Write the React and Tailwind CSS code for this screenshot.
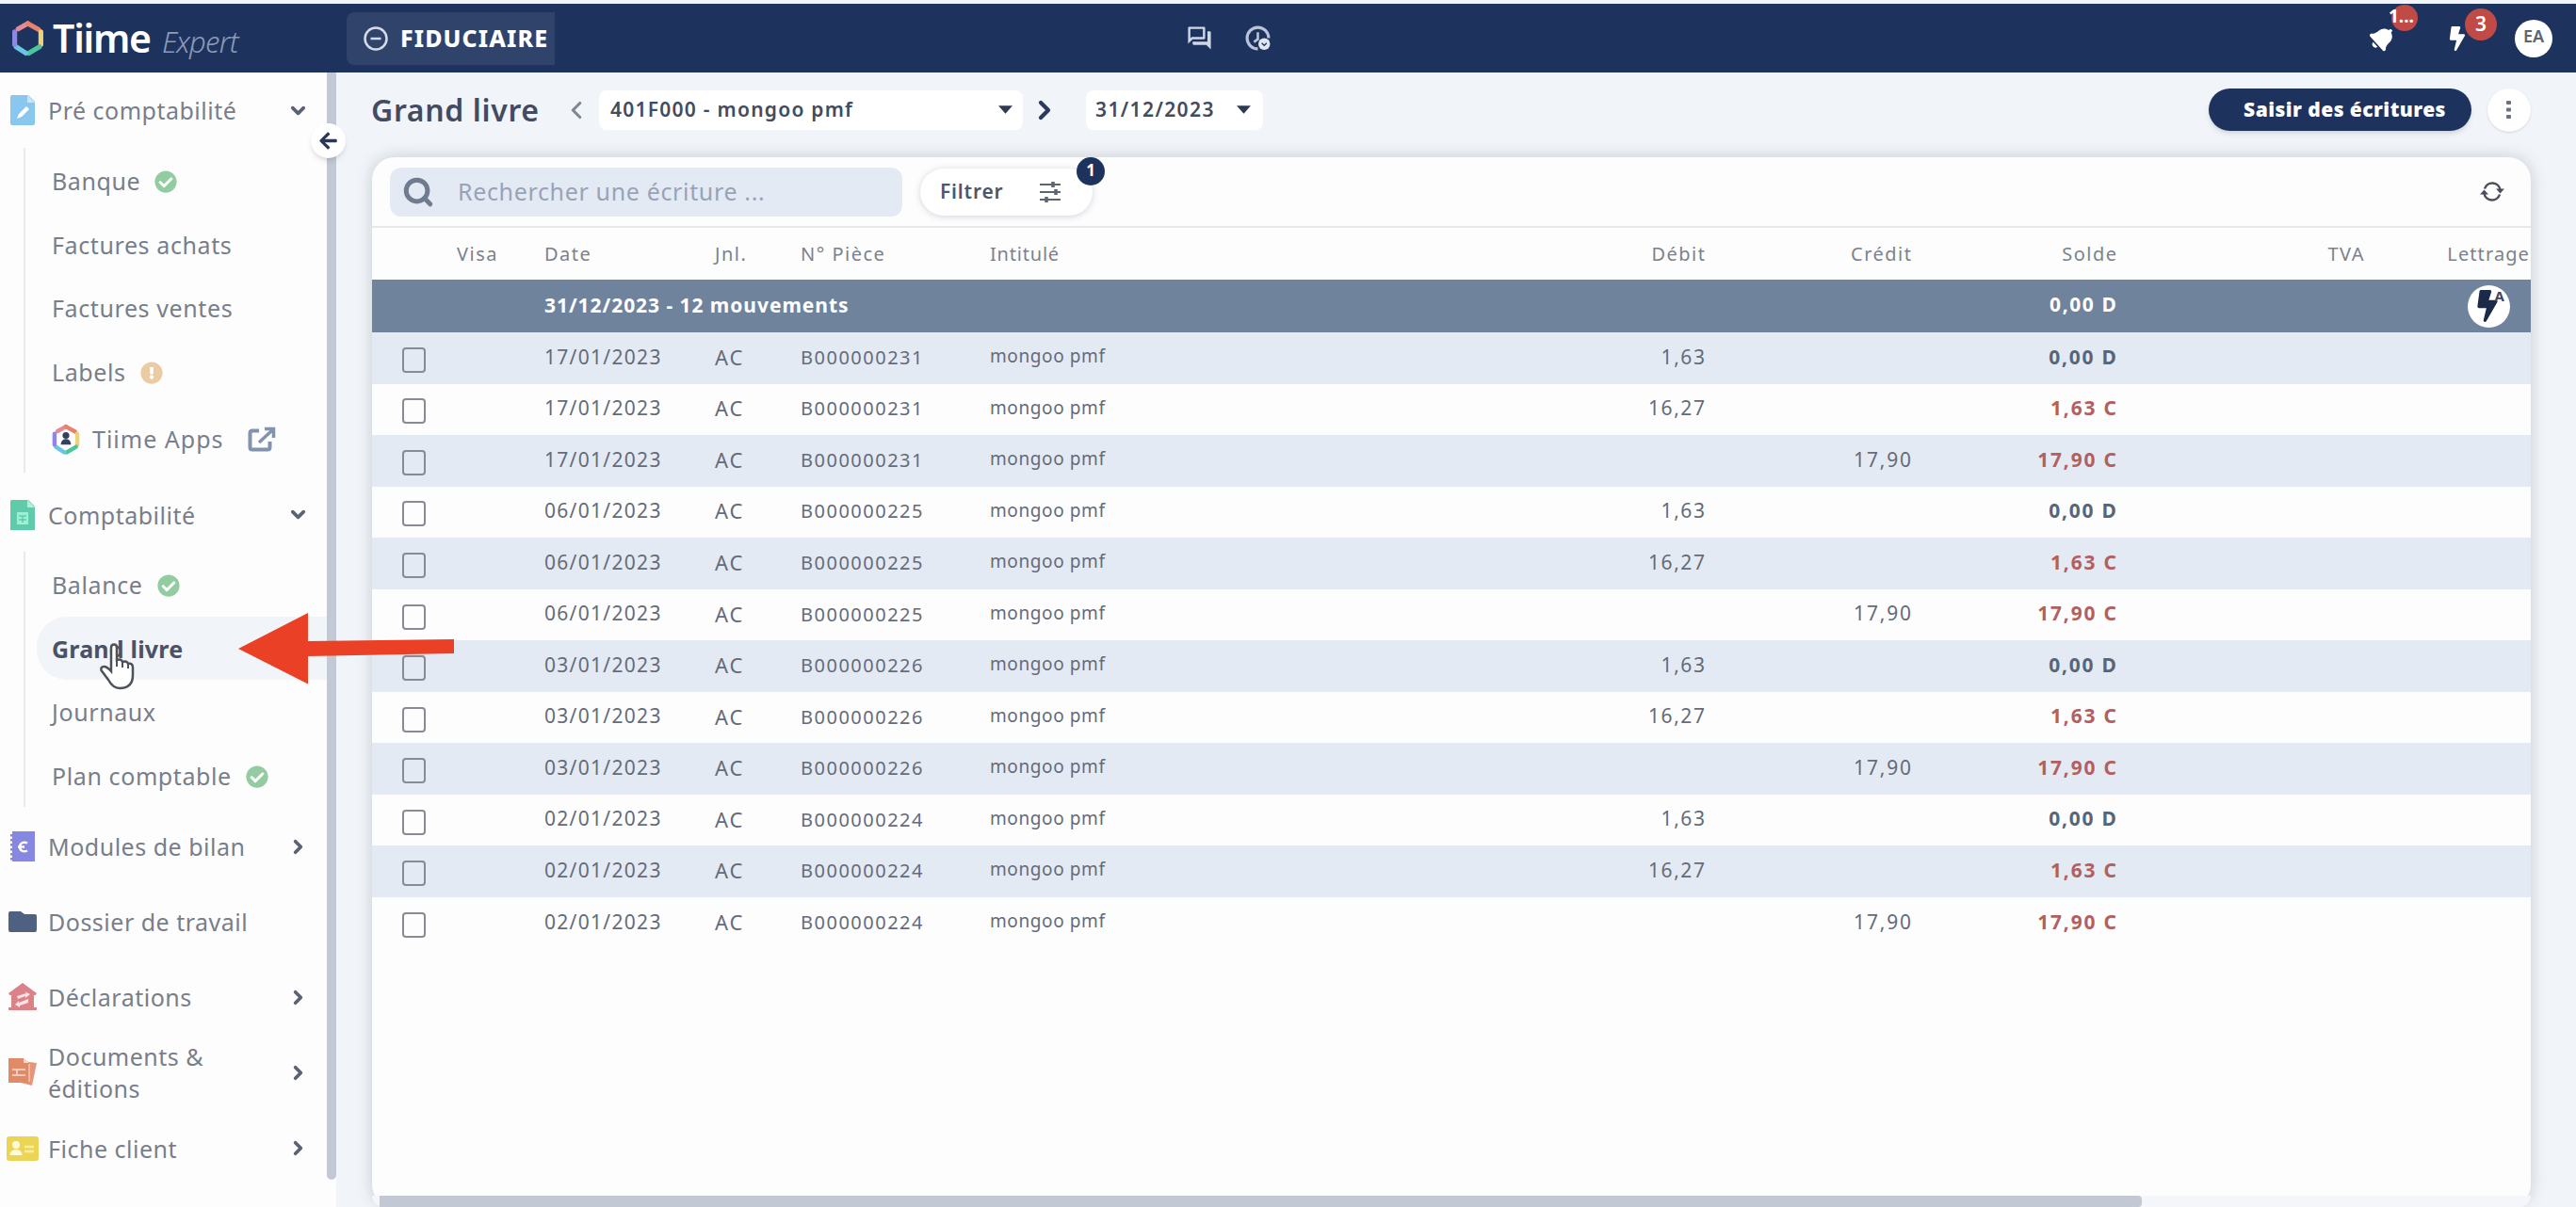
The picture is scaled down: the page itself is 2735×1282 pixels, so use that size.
import React, { useState } from 'react'
import { ChevronDown, ChevronRight, ChevronLeft, Search } from 'lucide-react'
import { FaBell, FaBolt, FaCheckCircle, FaExclamationCircle, FaArrowLeft } from 'react-icons/fa'
import { MdOutlineQuestionAnswer } from 'react-icons/md'

const ECRITURES = [
  ['17/01/2023', 'B000000231'],
  ['06/01/2023', 'B000000225'],
  ['03/01/2023', 'B000000226'],
  ['02/01/2023', 'B000000224'],
].flatMap(([date, piece]) => [
  { date, piece, debit: '1,63', credit: '', solde: '0,00 D' },
  { date, piece, debit: '16,27', credit: '', solde: '1,63 C' },
  { date, piece, debit: '', credit: '17,90', solde: '17,90 C' },
])

const COLS = 'grid grid-cols-[90px_93px_181px_91px_201px_759px_219px_218px_264px_176px] items-center'

function Hexagon({ className, children }) {
  return (
    <svg viewBox="0 0 34 38" className={className} fill="none" strokeWidth="5" strokeLinecap="round">
      <path d="M7 9 L17 3.5" stroke="#e58b93" />
      <path d="M17 3.5 L28 9.5" stroke="#e7826f" />
      <path d="M30.5 12 V25" stroke="#ecd279" />
      <path d="M29 27.5 L18 34" stroke="#4cc59b" />
      <path d="M15 34 L5 27.5" stroke="#6ec4e6" />
      <path d="M3.5 25 V12" stroke="#8f86ea" />
      {children}
    </svg>
  )
}

function IconPre() {
  return (
    <svg viewBox="0 0 26 32" className="w-[26px] h-8">
      <path d="M2 0h17l7 7v23a2 2 0 0 1-2 2H2a2 2 0 0 1-2-2V2a2 2 0 0 1 2-2z" fill="#8ac7ee" />
      <path d="M18 0v8h8z" fill="#c9e6f9" />
      <path d="M7 25l2-5 8-8 3 3-8 8z" fill="#fff" />
    </svg>
  )
}

function IconCompta() {
  return (
    <svg viewBox="0 0 26 32" className="w-[26px] h-8">
      <path d="M1 0h18l7 7v25H0V1z" fill="#5fcbaa" />
      <path d="M18 0v8h8z" fill="#b5f0dd" />
      <path d="M7 13h12v13H7z" fill="#9df0d6" />
      <path d="M9 17h8M9 21h8M13 17v7" stroke="#5fcbaa" strokeWidth="1.5" />
    </svg>
  )
}

function IconModules() {
  return (
    <svg viewBox="0 0 26 32" className="w-[26px] h-8">
      <path d="M2 0h24v32H2z" fill="#8587e0" />
      <path d="M1 3v28" stroke="#8587e0" strokeWidth="3" strokeDasharray="2.5 2.5" />
      <path d="M18 12.5c-4-2-8 0-8 4s4 6 8 4M8 16.5h7" stroke="#fff" strokeWidth="2.5" fill="none" />
    </svg>
  )
}

function IconDossier() {
  return (
    <svg viewBox="0 0 30 22" className="w-[30px] h-[22px]">
      <path d="M2 0h11l4 3h11a2 2 0 0 1 2 2v15a2 2 0 0 1-2 2H2a2 2 0 0 1-2-2V2a2 2 0 0 1 2-2z" fill="#506080" />
    </svg>
  )
}

function IconDeclarations() {
  return (
    <svg viewBox="0 0 30 30" className="w-[30px] h-[30px]" fill="#db8289">
      <path d="M15 0l15 11-1.5 2H27v13h3v3H0v-3h3V13H1.5L0 11z" />
      <path d="M9 14l10-3-2-2 6 3-5 4v-2l-8 3zM21 17l-10 4v-2l-4 4 5 3v-2l9-3z" fill="#fbe4e6" />
    </svg>
  )
}

function IconDocuments() {
  return (
    <svg viewBox="0 0 30 30" className="w-[30px] h-[30px]">
      <path d="M14 3l16 2-5 24-16-4z" fill="#e49778" />
      <path d="M0 0h16l6 5v21H0z" fill="#e08a68" />
      <path d="M16 0v5h6z" fill="#fbd9c9" />
      <path d="M4 12h14M4 18h14M9 12v6" stroke="#fbe0d3" strokeWidth="1.5" />
      <path d="M22 6v19" stroke="#fbe0d3" strokeWidth="1" />
    </svg>
  )
}

function IconFiche() {
  return (
    <svg viewBox="0 0 34 26" className="w-[34px] h-[26px]">
      <rect width="34" height="26" rx="3" fill="#ecd455" />
      <circle cx="10" cy="9" r="4" fill="#fffbd9" />
      <path d="M3.5 20c0-8 13-8 13 0z" fill="#fffbd9" />
      <path d="M19 11h10M19 16h10" stroke="#f9ee9e" strokeWidth="2.5" />
    </svg>
  )
}

function Section({ icon, label, chevron, className }) {
  return (
    <div className={'flex items-center pr-[19px] ' + className}>
      <div className="w-[47px] flex justify-center shrink-0">{icon}</div>
      <span className="ml-1 flex-1 text-[25px] leading-[34px] tracking-[0.5px] whitespace-pre-line">{label}</span>
      {chevron === 'down' && <ChevronDown size={23} strokeWidth={3.8} className="text-[#5a6274]" />}
      {chevron === 'right' && <ChevronRight size={23} strokeWidth={3.8} className="text-[#5a6274]" />}
    </div>
  )
}

function Item({ label, status, className }) {
  return (
    <div className={'flex items-center pt-0.5 ' + className}>
      <span className="text-[25px]">{label}</span>
      {status === 'ok' && <FaCheckCircle size={24} className="ml-[15px] text-[#93cca0]" />}
      {status === 'warn' && <FaExclamationCircle size={24} className="ml-[15px] text-[#ebcba3]" />}
    </div>
  )
}

function Sidebar() {
  return (
    <aside className="relative w-[357px] shrink-0 flex bg-[#fdfdfe] text-[#787e8a]">
      <nav className="w-[347px] flex flex-col">
        <Section icon={<IconPre />} label="Pré comptabilité" chevron="down" className="h-20" />
        <div className="ml-[25px] border-l-2 border-[#e8eaed] tracking-[0.6px]">
          <Item label="Banque" status="ok" className="pl-[28px] h-[70px]" />
          <Item label="Factures achats" className="pl-[28px] h-[66px]" />
          <Item label="Factures ventes" className="pl-[28px] h-[67px]" />
          <Item label="Labels" status="warn" className="pl-[28px] h-[70px]" />
          <div className="flex items-center h-[72px] pl-[27px] pt-0.5">
            <Hexagon className="w-[32px] h-[34px]">
              <circle cx="17" cy="14" r="4" fill="#34405f" />
              <path d="M11 25c0-9 12-9 12 0z" fill="#34405f" />
            </Hexagon>
            <span className="ml-3 text-[25px] tracking-[1px]">Tiime Apps</span>
            <svg viewBox="0 0 30 28" className="ml-[26px] w-[30px] h-7" fill="none" stroke="#8293ae" strokeWidth="4">
              <path d="M12 4.5H5Q2.5 4.5 2.5 7v15q0 2.500 2.500 2.500h16q2.500 0 2.500-2.500v-6" />
              <path d="M12 17L26 4M18 2.5h9.5V12" strokeWidth="3.5" />
            </svg>
          </div>
        </div>
        <Section icon={<IconCompta />} label="Comptabilité" chevron="down" className="h-[84px] pt-[5px]" />
        <div className="ml-[25px] border-l-2 border-[#e8eaed] tracking-[0.6px]">
          <Item label="Balance" status="ok" className="pl-[28px] h-[70px]" />
          <Item label="Grand livre" className="-my-px ml-[12px] pl-[16px] h-[67px] rounded-l-[32px] bg-[#f1f4f8] font-bold text-[#4a5267] tracking-[0.2px]" />
          <Item label="Journaux" className="pl-[28px] h-[70px]" />
          <Item label="Plan comptable" status="ok" className="pl-[28px] h-[66px]" />
        </div>
        <Section icon={<IconModules />} label="Modules de bilan" chevron="right" className="h-20 pt-1" />
        <Section icon={<IconDossier />} label="Dossier de travail" className="h-20 pt-1" />
        <Section icon={<IconDeclarations />} label="Déclarations" chevron="right" className="h-20 pt-1" />
        <Section icon={<IconDocuments />} label={'Documents &\néditions'} chevron="right" className="h-20 pt-1" />
        <Section icon={<IconFiche />} label="Fiche client" chevron="right" className="h-20 pt-[5px]" />
      </nav>
      <div className="w-[10px] h-[1176px] rounded-b-full bg-[#c3c9d4]" />
      <button className="absolute left-[330px] top-[54px] size-[37px] rounded-full bg-white shadow-md flex items-center justify-center text-[#2b3752]">
        <FaArrowLeft size={21} />
      </button>
    </aside>
  )
}

function TopBar() {
  return (
    <header className="h-[73px] bg-[#1d335e] flex items-center text-white shrink-0">
      <div className="w-[368px] pl-[12px] flex items-center">
        <Hexagon className="w-[35px] h-[42px]" />
        <span className="ml-[9px] text-[41px] leading-none font-semibold tracking-[-1.2px]">Tiime</span>
        <span className="ml-[12px] mt-2 text-[31px] leading-none italic font-light text-[#8d9bb8] tracking-[-0.8px]">Expert</span>
      </div>
      <div className="w-[221px] h-14 rounded-lg rounded-r-none bg-[#30436b] pl-[18px] flex items-center">
        <svg viewBox="0 0 26 26" className="size-[26px]" fill="none" stroke="#d5dbe8" strokeWidth="2.5">
          <circle cx="13" cy="13" r="11.5" />
          <path d="M7.5 13h11" />
        </svg>
        <span className="ml-[13px] text-[25px] font-extrabold tracking-[1.1px]">FIDUCIAIRE</span>
      </div>
      <div className="ml-[670px] flex items-center gap-[34px] text-[#cfd7e6]">
        <MdOutlineQuestionAnswer size={29} />
        <svg viewBox="0 0 26 26" className="size-[27px]" fill="none" stroke="#b9c4d8" strokeWidth="3">
          <path d="M13 24A11 11 0 1 1 24 13" />
          <path d="M13 7v7l-4 3" strokeWidth="2.5" />
          <circle cx="19.5" cy="19" r="6" fill="#dfe6f1" stroke="none" />
          <path d="M17 18l2.5 2.500L22 18" stroke="#1d335e" strokeWidth="1.2" />
        </svg>
      </div>
      <div className="ml-auto mr-[25px] flex items-center">
        <div className="relative">
          <FaBell size={27} className="rotate-[48deg]" />
          <span className="absolute left-[23px] -top-[22px] size-7 rounded-full bg-[#c04a46]" />
          <span className="absolute left-[20px] -top-[22px] text-[19px] font-bold leading-6">1...</span>
        </div>
        <div className="relative ml-[53px]">
          <FaBolt size={26} />
          <span className="absolute left-[21px] -top-[19px] size-[34px] rounded-full bg-[#c04a46] text-[21px] font-semibold leading-[32px] text-center">3</span>
        </div>
        <div className="ml-[48px] size-10 rounded-full bg-white text-[#5d6470] text-[18px] font-semibold flex items-center justify-center pb-1">EA</div>
      </div>
    </header>
  )
}

function Caret() {
  return (
    <svg viewBox="0 0 16 9" className="w-[15px] h-[9px]">
      <path d="M0 0h16l-8 9z" fill="#2f3a52" />
    </svg>
  )
}

function Toolbar() {
  return (
    <div className="h-[90px] pl-[37px] pr-12 flex items-center pb-[11px]">
      <h1 className="w-[209px] text-[32px] font-semibold text-[#434b62] tracking-[0.65px] whitespace-nowrap">Grand livre</h1>
      <ChevronLeft size={30} strokeWidth={2.5} className="-ml-[6px] text-[#7f8797]" />
      <div className="ml-[9px] w-[450px] h-[42px] rounded-lg bg-white pl-3 pr-[11px] flex items-center justify-between text-[#434b5e]">
        <span className="text-[21px] font-semibold tracking-[1.25px]">401F000 - mongoo pmf</span>
        <Caret />
      </div>
      <ChevronRight size={32} strokeWidth={3.2} className="ml-[7px] text-[#2b3a5c]" />
      <div className="ml-[28px] w-[188px] h-[42px] rounded-lg bg-white pl-[10px] pr-[13px] flex items-center justify-between text-[#434b5e]">
        <span className="text-[21px] font-semibold tracking-[1.4px]">31/12/2023</span>
        <Caret />
      </div>
      <button className="ml-auto w-[279px] h-[45px] rounded-full bg-[#1d335e] pl-[10px] text-white text-[21px] font-black shadow-md tracking-[0.45px]">
        Saisir des écritures
      </button>
      <button className="ml-[17px] size-[46px] rounded-full bg-white shadow flex items-center justify-center">
        <svg viewBox="0 0 6 20" className="w-[6px] h-5" fill="#6b717d">
          <rect y="0" width="5" height="4" rx="1" />
          <rect y="7.5" width="5" height="4" rx="1" />
          <rect y="15" width="5" height="4" rx="1" />
        </svg>
      </button>
    </div>
  )
}

function Table() {
  const [coches, setCoches] = useState({})
  return (
    <div className="text-[#646b79] text-[21px]">
      <div className={COLS + ' h-[55px] pt-px text-[20px] tracking-[1.5px] text-[#7c818b]'}>
        <span />
        <span>Visa</span>
        <span>Date</span>
        <span>Jnl.</span>
        <span>N° Pièce</span>
        <span className="flex justify-between"><span className="tracking-[0.8px]">Intitulé</span><span className="-mr-[1.5px]">Débit</span></span>
        <span className="-mr-[1.5px] text-right">Crédit</span>
        <span className="-mr-[1.5px] text-right">Solde</span>
        <span className="text-right">TVA</span>
        <span className="text-right pr-px tracking-[1.1px]">Lettrage</span>
      </div>
      <div className={COLS + ' h-14 bg-[#70839d] text-white font-bold text-[21px]'}>
        <span className="col-start-3 col-span-5 tracking-[0.95px]">31/12/2023 - 12 mouvements</span>
        <span className="-mr-[1.5px] text-right tracking-[1.6px] pb-0.5">0,00 D</span>
        <span className="col-start-10 justify-self-end mr-[22px] relative size-[45px] rounded-full bg-white flex items-center justify-center">
          <FaBolt size={34} className="mr-1 text-[#1c2a4a]" />
          <span className="absolute right-[6px] top-[4px] text-[15px] leading-none text-[#3c4763]">A</span>
        </span>
      </div>
      {ECRITURES.map((e, i) => (
        <div key={i} className={COLS + ' h-[54.55px] ' + (i % 2 ? 'bg-[#fdfdfe]' : 'bg-[#e4eaf3]')}>
          <button onClick={() => setCoches({ ...coches, [i]: !coches[i] })}
            className={'ml-[32px] mt-[4px] w-[25px] h-[27px] rounded-[4px] border-[2.5px] border-[#868b94] ' + (coches[i] ? 'bg-[#1d335e]' : '')} />
          <span />
          <span className="tracking-[1.3px] pb-[2px]">{e.date}</span>
          <span className="text-[22px] tracking-[2px] pb-[2px]">AC</span>
          <span className="text-[20px] tracking-[1.5px] pb-px">{e.piece}</span>
          <span className="flex justify-between items-center pb-[2px]">
            <span className="text-[19px] tracking-[0.6px] pb-[2px]">mongoo pmf</span>
            <span className="-mr-[1.6px] tracking-[1.6px]">{e.debit}</span>
          </span>
          <span className="-mr-[1.8px] text-right tracking-[1.8px] pb-[2px]">{e.credit}</span>
          <span className={'-mr-[1.8px] text-right font-bold text-[21px] tracking-[1.8px] pb-[2px] ' + (e.solde.endsWith('C') ? 'text-[#b2605f]' : 'text-[#56667a]')}>{e.solde}</span>
        </div>
      ))}
    </div>
  )
}

export default function App() {
  return (
    <div className="relative w-[2735px] h-[1282px] overflow-hidden bg-[#f1f4f8] pt-1 flex flex-col font-['Noto_Sans',sans-serif]">
      <TopBar />
      <div className="flex flex-1 min-h-0">
        <Sidebar />
        <main className="flex-1 min-w-0 flex flex-col">
          <Toolbar />
          <section className="ml-[38px] w-[2292px] h-[1115px] shrink-0 rounded-[24px] bg-[#fdfdfe] shadow-[0_0_16px_rgba(70,90,110,0.25)] flex flex-col">
            <div className="h-[75px] shrink-0 border-b-2 border-[#e6e8ec] pl-[19px] pr-[28px] flex items-center">
              <div className="w-[544px] h-[52px] rounded-xl bg-[#e4eaf3] pl-[13px] flex items-center">
                <Search size={34} strokeWidth={3.5} className="text-[#6f7c90]" />
                <span className="ml-[25px] text-[25px] text-[#97a3b8] tracking-[0.65px]">Rechercher une écriture ...</span>
              </div>
              <button className="relative ml-[19px] w-[183px] h-[50px] rounded-full bg-white shadow-[0_1px_7px_rgba(70,90,110,0.25)] pl-[21px] flex items-center text-[#4f5667]">
                <span className="text-[21px] font-semibold tracking-[0.8px] w-[106px] text-left">Filtrer</span>
                <svg viewBox="0 0 22 22" className="size-[22px]" stroke="#5d6573" strokeWidth="2">
                  <path d="M0 3h22M0 11h22M0 19h22" />
                  <path d="M14 0v6M17 8v6M7 16v6" strokeWidth="3.5" />
                </svg>
                <span className="absolute right-[-13px] top-[-12px] size-[30px] rounded-full bg-[#1d335e] text-white text-[17px] font-bold leading-[28px] text-center">1</span>
              </button>
              <svg viewBox="0 0 26 22" className="ml-auto w-[26px] h-[23px]" fill="none" stroke="#4a4f5a" strokeWidth="2.5">
                <path d="M5 8a8.5 8.5 0 0 1 16.5 1M21 14a8.5 8.5 0 0 1-16.5-1" />
                <path d="M17 8h9l-4.5 5zM9 14H0l4.5-5z" fill="#4a4f5a" stroke="none" />
              </svg>
            </div>
            <Table />
            <div className="mt-auto h-[12px] shrink-0 rounded-b-[24px] bg-[#f5f6f9] pl-[8px]">
              <div className="w-[1871px] h-full rounded-r bg-[#c3c9d4]" />
            </div>
          </section>
        </main>
      </div>

      {/* annotation arrow and mouse pointer */}
      <svg viewBox="0 0 230 76" className="absolute left-[253px] top-[651px] w-[230px] h-[76px]" fill="#ea4025">
        <path d="M0 38L74 0v30l155-2v15l-155 3v29.5z" />
      </svg>
      <svg viewBox="0 0 38 50" className="absolute left-[105px] top-[683px] w-[38px] h-[50px]">
        <path d="M13 5q0-3.5 3-3.5T19 5v13q5-1.5 6 2 5-1.5 6 2 5-1 5 4v8q0 14-14 14-7 0-12-9L2.5 29q-1-4 3-4 3 0 7.5 5z"
          fill="#fff" stroke="#4d5159" strokeWidth="2.5" />
        <path d="M19 18v7M25 20v6M31 22v5" stroke="#4d5159" strokeWidth="2" />
      </svg>
    </div>
  )
}
